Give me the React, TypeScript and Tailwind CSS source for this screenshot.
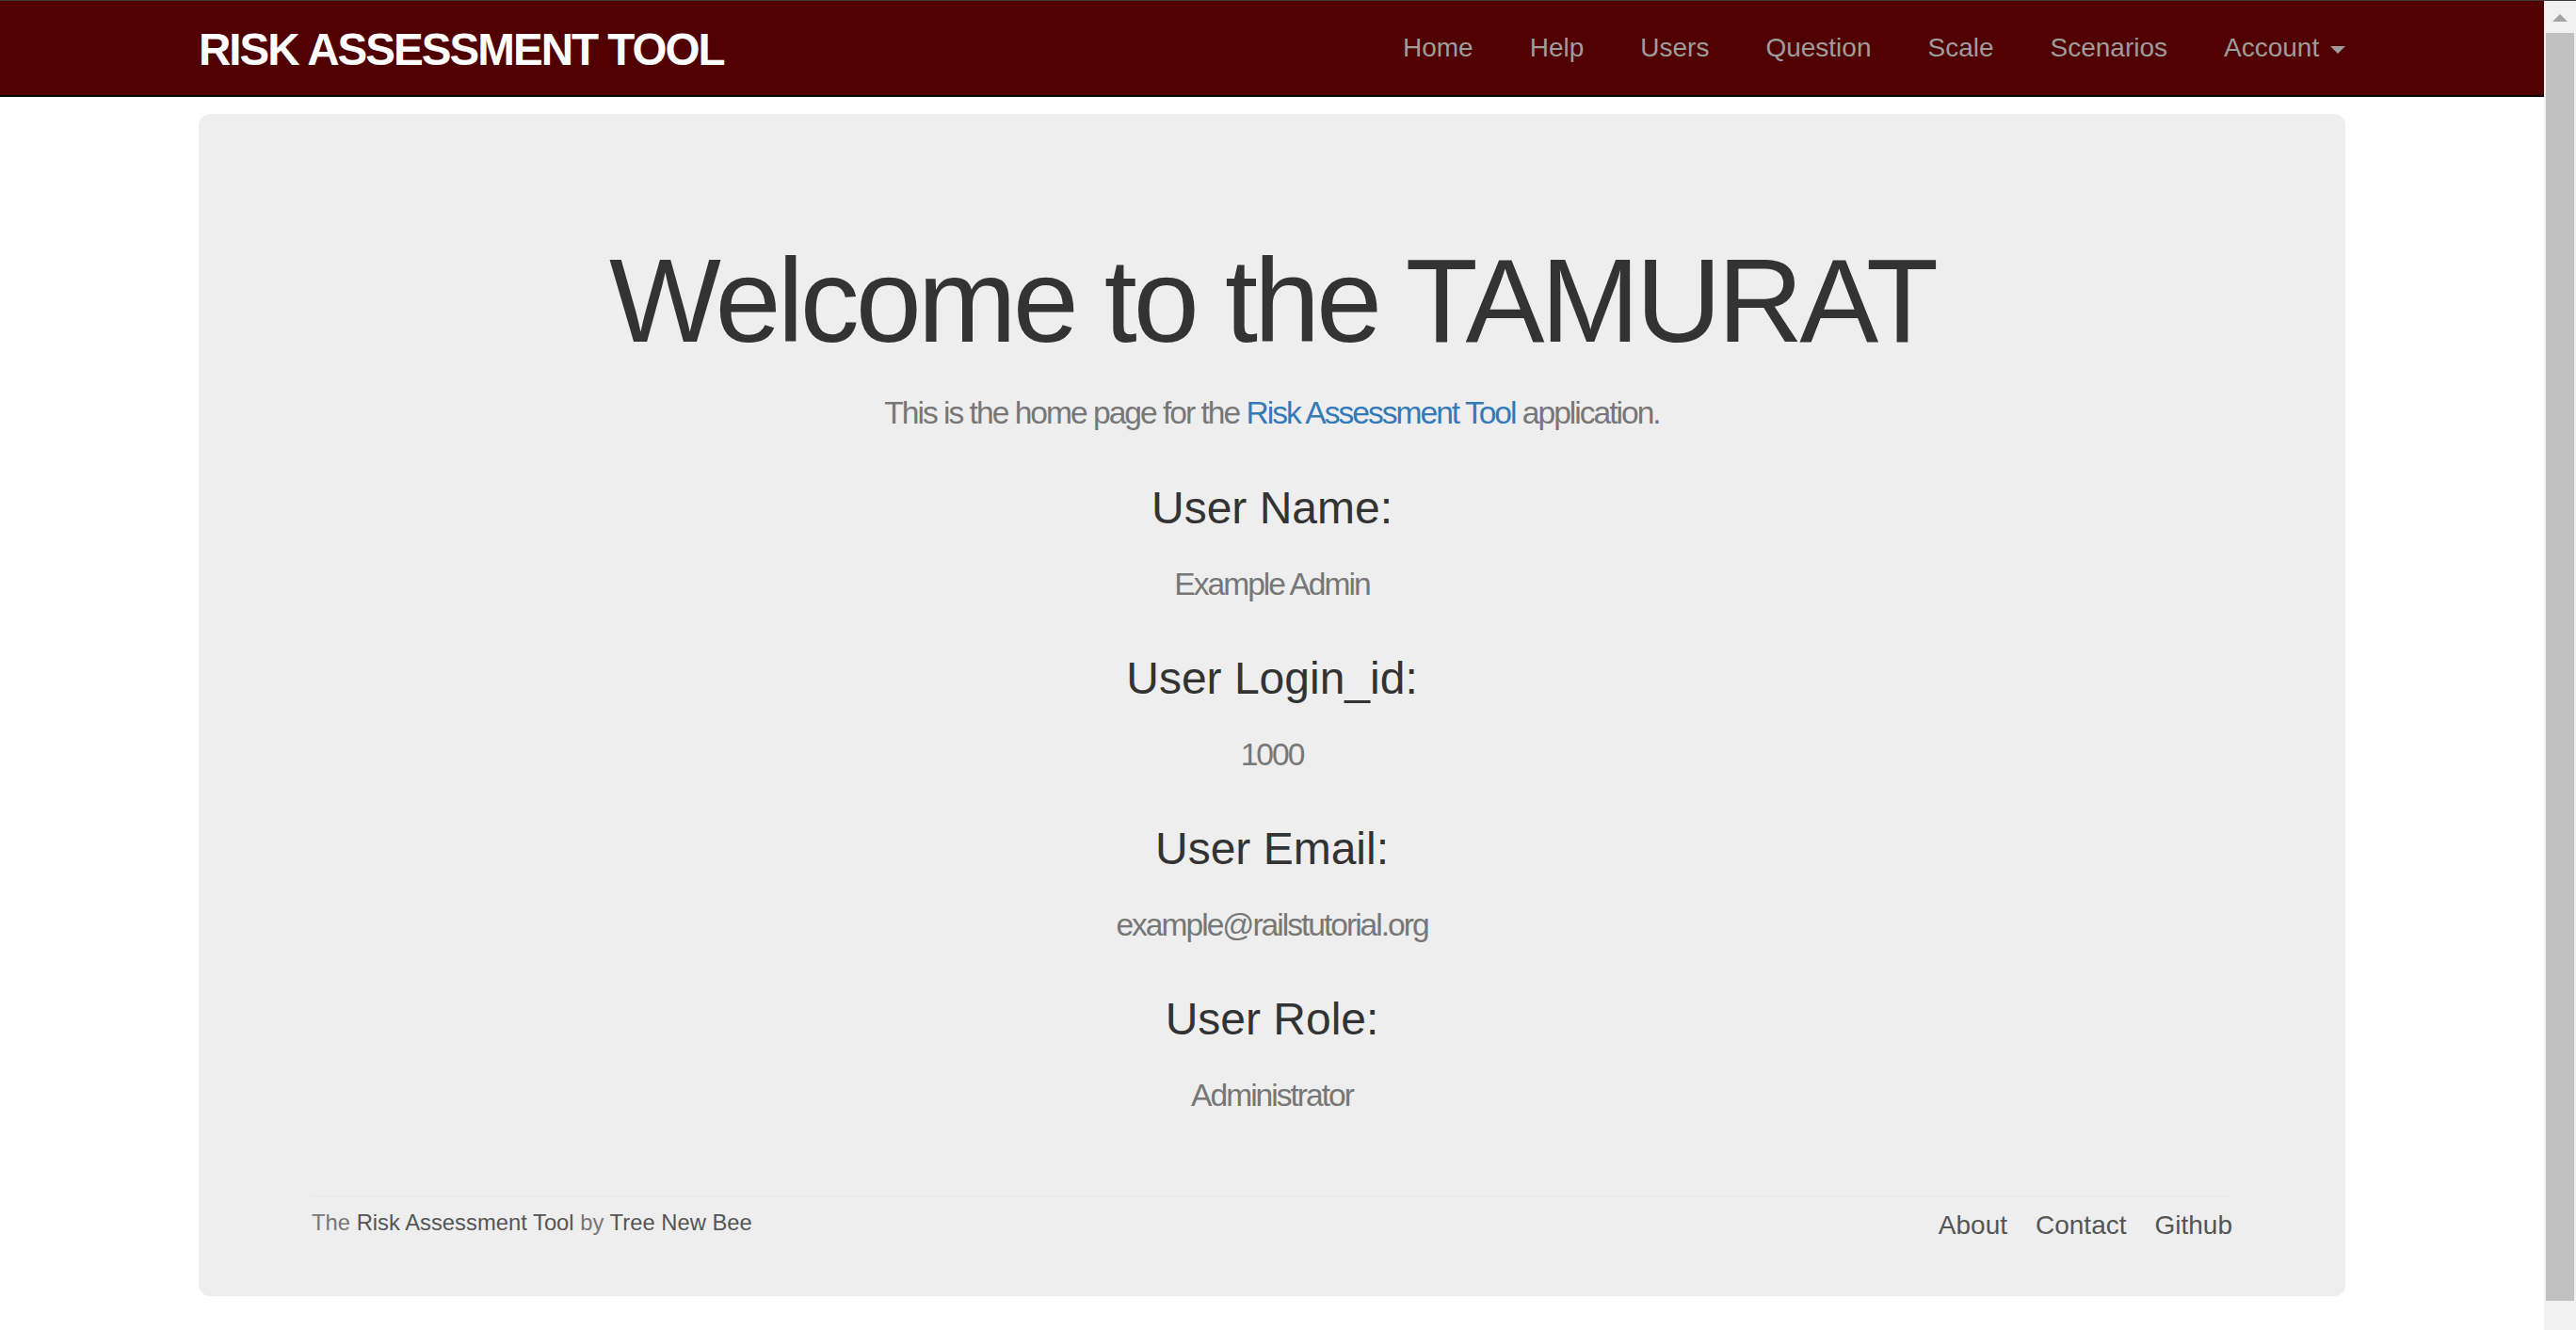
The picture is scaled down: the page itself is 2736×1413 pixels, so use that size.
import React from "react";

const navItems = ["Home", "Help", "Users", "Question", "Scale", "Scenarios"];

const fields: [string, string][] = [
  ["User Name:", "Example Admin"],
  ["User Login_id:", "1000"],
  ["User Email:", "example@railstutorial.org"],
  ["User Role:", "Administrator"],
];

export default function App() {
  return (
    <div className="w-[2736px] h-[1413px] overflow-hidden flex flex-col bg-white font-['Liberation_Sans',Arial,sans-serif]">
      <div className="h-px bg-[#3b3b3b]" />
      <div className="flex flex-1 min-h-0">
        <div className="w-[2702px] flex flex-col">
          <header className="h-[102px] bg-[#500000] border-b-2 border-[#080808]">
            <div className="w-[2280px] mx-auto flex justify-between items-start">
              <a className="pt-[18px] leading-[68px] text-[47.6px] font-bold tracking-[-2px] text-white uppercase">
                Risk Assessment Tool
              </a>
              <ul className="flex mr-[-30px]">
                {navItems.map((n) => (
                  <li key={n}>
                    <a className="block px-[30px] py-[30px] leading-[40px] text-[28px] text-[#9d9d9d]">{n}</a>
                  </li>
                ))}
                <li>
                  <a className="block px-[30px] py-[30px] leading-[40px] text-[28px] text-[#9d9d9d] whitespace-pre">
                    {"Account "}
                    <span className="inline-block w-0 h-0 ml-[4px] align-middle border-t-[8px] border-t-[#9d9d9d] border-x-[8px] border-x-transparent" />
                  </a>
                </li>
              </ul>
            </div>
          </header>
          <main className="pt-[18px]">
            <div className="w-[2280px] mx-auto bg-[#eeeeee] rounded-[12px] pt-[129px] pb-[55px] px-[120px] text-center">
              <h1 className="text-[126px] leading-[139px] tracking-[-4px] text-[#333333]">Welcome to the TAMURAT</h1>
              <p className="mt-[31px] text-[33.6px] leading-[37px] tracking-[-2px] text-[#777777]">
                This is the home page for the <a className="text-[#337ab7]">Risk Assessment Tool</a> application.
              </p>
              {fields.map(([label, value], i) => (
                <div key={label}>
                  <h3 className={`${i === 0 ? "mt-[56px]" : "mt-[55px]"} text-[48px] leading-[53px] text-[#333333]`}>{label}</h3>
                  <p className="mt-[36px] text-[33.6px] leading-[37px] tracking-[-2px] text-[#777777]">{value}</p>
                </div>
              ))}
              <footer className="mt-[88px] border-t-2 border-[#eaeaea] pt-[10px] flex justify-between items-start text-left">
                <small className="text-[23.8px] leading-[34px] text-[#777777]">
                  The <a className="text-[#555555]">Risk Assessment Tool</a> by <a className="text-[#555555]">Tree New Bee</a>
                </small>
                <ul className="flex gap-[30px] text-[28px] leading-[40px] text-[#555555]">
                  <li>About</li>
                  <li>Contact</li>
                  <li>Github</li>
                </ul>
              </footer>
            </div>
          </main>
        </div>
        <aside className="w-[34px] bg-[#f1f1f1] flex flex-col items-start pl-[2px]">
          <div className="h-[34px] w-[30px] flex justify-center pt-[14px]">
            <svg width="16" height="8" viewBox="0 0 16 8">
              <polygon points="8,0 16,8 0,8" fill="#a3a3a3" />
            </svg>
          </div>
          <div className="w-[30px] h-[1347px] bg-[#c1c1c1]" />
        </aside>
      </div>
    </div>
  );
}
